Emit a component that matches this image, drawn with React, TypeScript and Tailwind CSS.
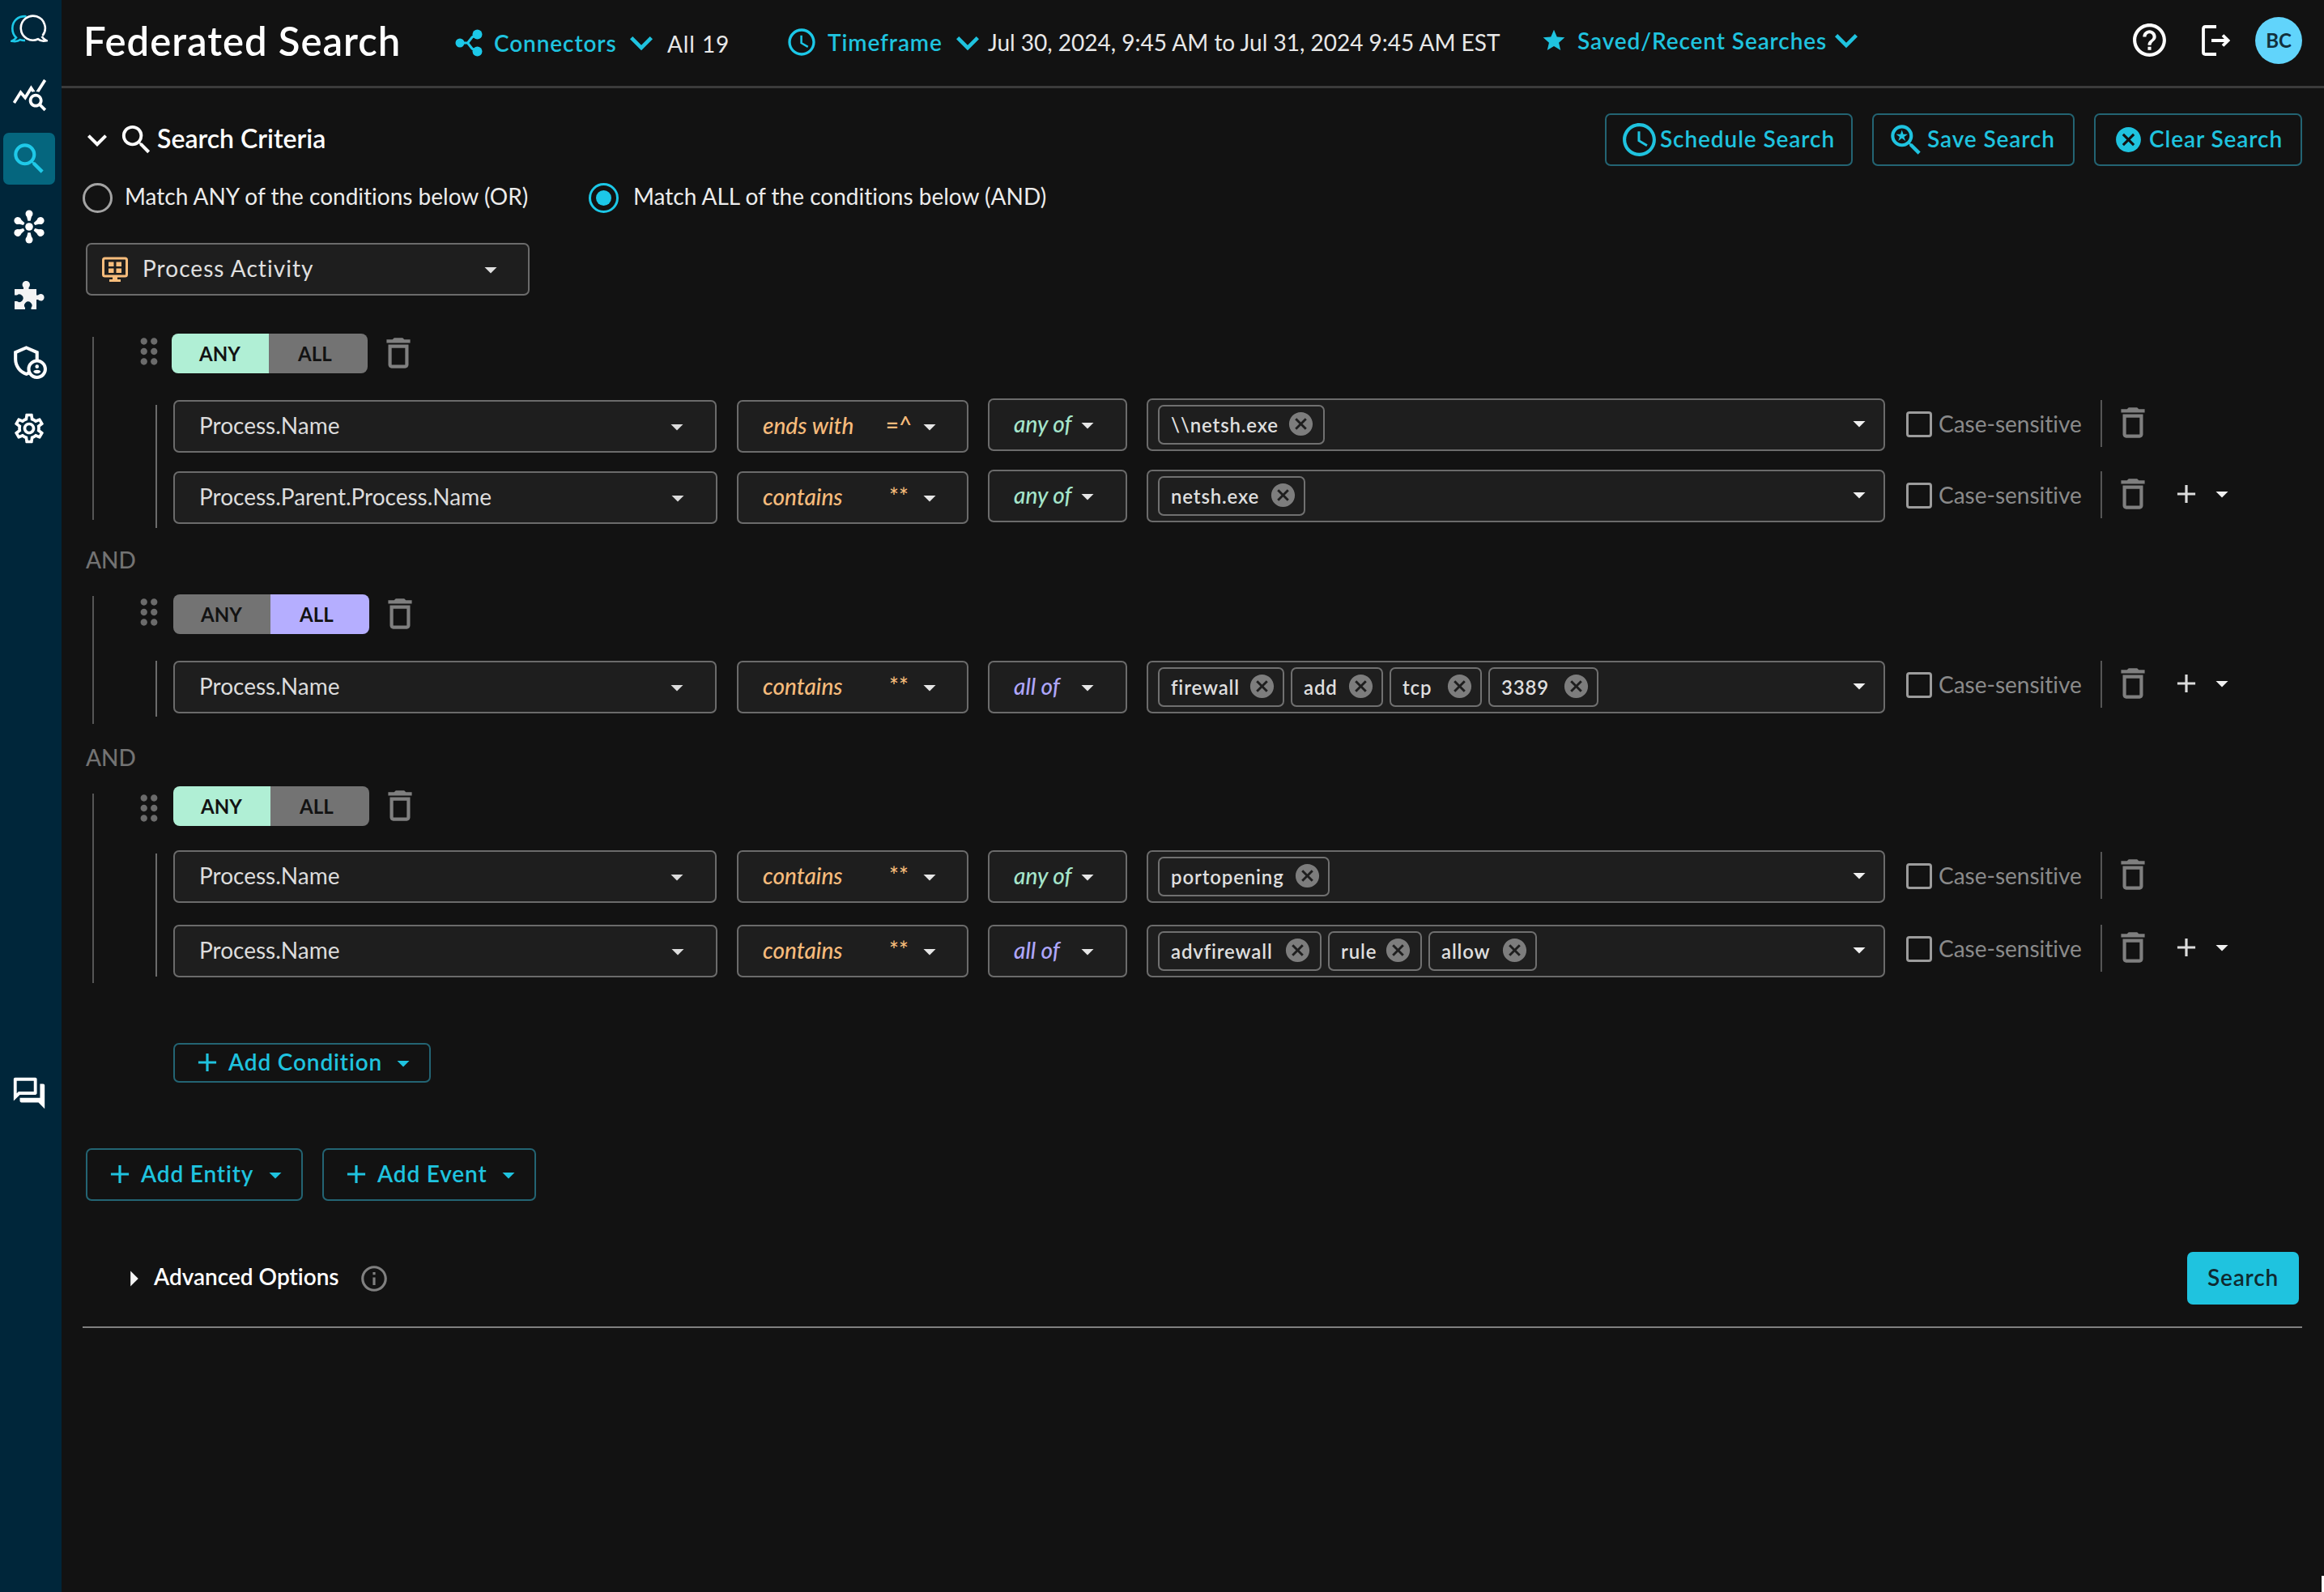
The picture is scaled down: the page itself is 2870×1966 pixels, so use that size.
import { useState } from "react";
import clsx from "clsx";
import {
  MdAccessTime,
  MdAdd,
  MdArrowDropDown,
  MdArrowRight,
  MdCancel,
  MdDeleteOutline,
  MdDragIndicator,
  MdHelpOutline,
  MdInfoOutline,
  MdKeyboardArrowDown,
  MdOutlineAdminPanelSettings,
  MdOutlineForum,
  MdOutlineSettings,
  MdQueryStats,
  MdSavedSearch,
  MdSearch,
  MdStar,
} from "react-icons/md";

interface chip {
  label: string;
  size: string;
}
interface condition {
  field: string;
  fieldSize: string;
  op: string;
  symbol: string;
  mode: string;
  chips: chip[];
  lift: string;
  drop: string;
  add: boolean;
}
interface group {
  active: string;
  height: string;
  outer: string;
  inner: string;
  toggle: string;
  drag: string;
  body: string;
  rows: condition[];
}

const groups: group[] = [
  {
    active: "ANY",
    height: "h-[240px]",
    outer: "mt-1 h-[226px]",
    inner: "mt-1.5 h-[152px]",
    toggle: "ml-[3px]",
    drag: "mb-[5px]",
    body: "mt-[33px] gap-[23px]",
    rows: [
      {
        field: "Process.Name",
        fieldSize: "w-[671px]",
        op: "ends with",
        symbol: "=^",
        mode: "any of",
        chips: [{ label: "\\\\netsh.exe", size: "w-[206px] pr-[10px]" }],
        lift: "-mt-0.5",
        drop: "",
        add: false,
      },
      {
        field: "Process.Parent.Process.Name",
        fieldSize: "w-[672px]",
        op: "contains",
        symbol: "**",
        mode: "any of",
        chips: [{ label: "netsh.exe", size: "w-[182px] pr-2" }],
        lift: "-mt-0.5",
        drop: "",
        add: true,
      },
    ],
  },
  {
    active: "ALL",
    height: "h-[160px]",
    outer: "mt-0.5 h-[158px]",
    inner: "h-[69px]",
    toggle: "ml-[5px]",
    drag: "mb-[5px]",
    body: "mt-[33px] gap-[23px]",
    rows: [
      {
        field: "Process.Name",
        fieldSize: "w-[671px]",
        op: "contains",
        symbol: "**",
        mode: "all of",
        chips: [
          { label: "firewall", size: "w-[156px] pr-2" },
          { label: "add", size: "w-[114px] pr-2" },
          { label: "tcp", size: "w-[114px] pr-2" },
          { label: "3389", size: "w-[136px] pr-2" },
        ],
        lift: "",
        drop: "",
        add: true,
      },
    ],
  },
  {
    active: "ANY",
    height: "h-[243px]",
    outer: "mt-[9px] h-[234px]",
    inner: "mt-1 h-[152px]",
    toggle: "ml-[5px]",
    drag: "mt-1",
    body: "mt-[30px] gap-[27px]",
    rows: [
      {
        field: "Process.Name",
        fieldSize: "w-[671px]",
        op: "contains",
        symbol: "**",
        mode: "any of",
        chips: [{ label: "portopening", size: "w-[212px] pr-2" }],
        lift: "",
        drop: "mt-0.5",
        add: false,
      },
      {
        field: "Process.Name",
        fieldSize: "w-[672px]",
        op: "contains",
        symbol: "**",
        mode: "all of",
        chips: [
          { label: "advfirewall", size: "w-[202px] pr-[10px]" },
          { label: "rule", size: "w-[116px] pr-[10px]" },
          { label: "allow", size: "w-[134px] pr-[8px]" },
        ],
        lift: "",
        drop: "",
        add: true,
      },
    ],
  },
];

function Logo() {
  return (
    <svg width="46" height="36" viewBox="0 0 46 36" fill="none" strokeWidth="2.6">
      <path d="M19.500 2.200C9 1.500 2.300 8 2.300 17c0 5.500 2 9 4.700 11.500C5.500 30.500 4 31.800 1.500 32.800c4 .800 8 .300 10.500-1.700 2 .800 4 1 6 .800" stroke="#1cc8e8" />
      <path d="M39.500 26A15 15 0 1 0 34 30.300c2.500 2.300 6 3 10.500 2-2.500-1-4.500-3-6-5.200" stroke="#fff" />
    </svg>
  );
}

function HubIcon() {
  return (
    <svg width="42" height="42" viewBox="-21 -21 42 42" fill="#fff">
      <circle r="4.800" />
      {[0, 62, 118, 180, 242, 298].map((a) => (
        <g key={a} transform={`rotate(${a})`}>
          <circle cy="-16" r="4.500" />
          <path d="M-3.300-14h6.600L1.600-7.200h-3.200z" />
        </g>
      ))}
    </svg>
  );
}

function PuzzleIcon() {
  return (
    <svg width="38" height="36" viewBox="0 0 38 36" fill="#f4f4f4">
      <path d="M1 10H12V8a4.700 4.700 0 1 1 6.500 0v2H28v7.500h2a4.300 4.300 0 1 1 0 5.500h-2v12h-6.500v-2a4.700 4.700 0 1 0-7.500 0v2H1V25h3a4.700 4.700 0 1 0 0-7.500H1z" />
    </svg>
  );
}

function ConnectorsIcon() {
  return (
    <svg width="34" height="34" viewBox="0 0 34 34" fill="#1cc8e8">
      <path d="M27 6.500 L21 10 L15.500 17 L21 24 L27 27.500 M15.500 17H5" stroke="#1cc8e8" strokeWidth="3" fill="none" />
      <circle cx="6" cy="17" r="5.500" />
      <circle cx="27.500" cy="6.500" r="6" />
      <circle cx="27.500" cy="27.500" r="6" />
    </svg>
  );
}

function LogoutIcon() {
  return (
    <svg width="36" height="40" viewBox="0 0 36 40" fill="none" stroke="#fff" strokeWidth="3.800">
      <path d="M19 3H5.500Q3 3 3 5.500v29Q3 37 5.500 37H19" />
      <path d="M13 20h20M27 13.500l6.500 6.500-6.500 6.500" />
    </svg>
  );
}

function MonitorIcon() {
  return (
    <svg width="34" height="32" viewBox="0 0 34 32" fill="#f9bd7c">
      <rect x="2.500" y="2" width="29" height="22" rx="2" fill="none" stroke="#f9bd7c" strokeWidth="3" />
      <path d="M9 6.500h6.500v5.500H9zM18.500 6.500h6.500v5.500h-6.500zM9 14.500h6.500v5.500H9zM18.500 14.500h6.500v5.500h-6.500zM14 24h6v4h4v3H10v-3h4z" />
    </svg>
  );
}

function Chip(props: chip) {
  return (
    <div className={clsx("flex h-[49px] items-center justify-between rounded-[7px] border-2 border-[#707070] pl-[14px]", props.size)}>
      <span className="text-[24px] font-semibold tracking-[0.85px] text-[#dedede]">{props.label}</span>
      <MdCancel size={35} className="-mt-[3px] shrink-0 text-[#7d7d7d]" />
    </div>
  );
}

function Row(props: condition) {
  const box = "flex h-[65px] items-center rounded-[7px] border-2 border-[#6b6b6b] bg-[#1e1e1e]";
  return (
    <div className="grid h-[65px] grid-cols-[696px_310px_196px_938px_auto] items-start text-[28px]">
      <div className={clsx(box, "justify-between pr-[29px] pl-[30px] text-[#dcdcdc]", props.fieldSize)}>
        <span className="-mt-1">{props.field}</span>
        <MdArrowDropDown size={36} />
      </div>
      <div className={clsx(box, "w-[286px] pl-[30px] font-medium text-[#f6bb7b] italic")}>
        <span className="-mt-1 w-[150px]">{props.op}</span>
        <span className="-mt-1.5 w-[36px] text-center not-italic">{props.symbol}</span>
        <MdArrowDropDown size={36} className="ml-[2px] text-[#e6e6e6]" />
      </div>
      <div className={clsx(box, props.lift, "w-[172px] pl-[30px] font-medium italic", props.mode === "any of" ? "text-[#a5e5cb]" : "text-[#aea6fa]")}>
        <span className="-mt-1 w-[73px]">{props.mode}</span>
        <MdArrowDropDown size={36} className="text-[#e6e6e6]" />
      </div>
      <div className={clsx(box, props.lift, "w-[912px] gap-2 pl-3")}>
        {props.chips.map((item: chip) => (
          <Chip key={item.label} {...item} />
        ))}
        <MdArrowDropDown size={36} className="-mt-1 mr-3 ml-auto text-[#f0f0f0]" />
      </div>
      <div className={clsx("flex h-[60px] items-center", props.drop)}>
        <div className="size-8 rounded-[4px] border-[3px] border-[#9c9c9c]" />
        <span className="-mt-0.5 ml-2 w-[200px] text-[#8a8a8a]">Case-sensitive</span>
        <div className="h-[58px] w-[2px] self-start bg-[#555555]" />
        <MdDeleteOutline size={50} className="mb-1 ml-[13px] text-[#7f7f7f]" />
        {props.add ? (
          <>
            <MdAdd size={38} className="mb-1 ml-[22px] text-[#dcdcdc]" />
            <MdArrowDropDown size={36} className="mb-1 ml-[7px] text-[#f0f0f0]" />
          </>
        ) : (
          <></>
        )}
      </div>
    </div>
  );
}

function Group(props: group) {
  const any = props.active === "ANY";
  return (
    <div className={clsx("flex items-start", props.height)}>
      <div className={clsx("ml-[38px] w-[2px] bg-[#555555]", props.outer)} />
      <div className="ml-[43px]">
        <div className="flex h-[49px] items-center">
          <MdDragIndicator size={50} className={clsx("text-[#6b6b6b]", props.drag)} />
          <div className={clsx("flex h-[49px] w-[242px] overflow-hidden rounded-[8px] text-[24px] font-bold text-[#121212]", props.toggle)}>
            <div className={clsx("flex w-[120px] items-center pl-[34px]", any ? "bg-[#b0efd5]" : "bg-[#737373]")}>ANY</div>
            <div className={clsx("flex flex-1 items-center pl-9", any ? "bg-[#737373]" : "bg-[#b5aeff]")}>ALL</div>
          </div>
          <MdDeleteOutline size={50} className="mb-px ml-[13px] text-[#7f7f7f]" />
        </div>
        <div className="flex">
          <div className={clsx("flex w-[55px] pl-[33px]", props.body)}>
            <div className={clsx("w-[2px] bg-[#6b6b6b]", props.inner)} />
          </div>
          <div className={clsx("flex flex-col", props.body)}>
            {props.rows.map((row: condition, i: number) => (
              <Row key={i} {...row} />
            ))}
          </div>
        </div>
      </div>
    </div>
  );
}

function Radio(props: { on: boolean }) {
  return (
    <div className={clsx("flex size-[37px] items-center justify-center rounded-full border-[3px]", props.on ? "border-[#1cc8e8]" : "border-[#a3a3a3]")}>
      {props.on ? <div className="size-[19px] rounded-full bg-[#1cc8e8]" /> : <></>}
    </div>
  );
}

function AddButton(props: { label: string; size: string; text: string }) {
  return (
    <button className={clsx("flex items-center rounded-[7px] border-2 border-[#236473] pl-[21px] text-[28px] font-semibold tracking-[0.85px] text-[#1fc3df]", props.size)}>
      <MdAdd size={38} className="mb-px" />
      <span className={clsx("mb-1 ml-[7px] text-left whitespace-nowrap", props.text)}>{props.label}</span>
      <MdArrowDropDown size={36} />
    </button>
  );
}

export default function App() {
  const [matchAll] = useState(true);

  return (
    <div className="flex h-[1966px] w-[2870px] overflow-hidden bg-[#121212] font-['Lato',sans-serif] text-white [font-variant-ligatures:none]">
      <nav className="flex w-[76px] shrink-0 flex-col bg-[#00263a]">
        <div className="mt-[18px] ml-[13px] h-9"><Logo /></div>
        <MdQueryStats size={45} className="mt-10 ml-[14px]" />
        <div className="mt-[25px] ml-1 flex h-16 w-16 items-center justify-center rounded-[7px] bg-[#05667e] text-[#1fc9e8]">
          <MdSearch size={50} />
        </div>
        <div className="mt-[31px] ml-[15px] h-[42px]"><HubIcon /></div>
        <div className="mt-[46px] ml-[17px] h-9"><PuzzleIcon /></div>
        <MdOutlineAdminPanelSettings size={49} className="mt-[38px] ml-[11px]" />
        <MdOutlineSettings size={44} className="mt-[37px] ml-[14px]" />
        <MdOutlineForum size={46} className="mt-[776px] ml-[13px]" />
      </nav>

      <div className="relative flex-1">
        <header className="flex h-[109px] items-center border-b-[3px] border-[#3b3b3b] text-[28px]">
          <h1 className="mb-1 ml-[27px] w-[459px] text-[49px] font-semibold tracking-[1px] whitespace-nowrap">Federated Search</h1>
          <ConnectorsIcon />
          <span className="ml-[14px] w-[154px] font-semibold tracking-[0.9px] text-[#1fc3df]">Connectors</span>
          <MdKeyboardArrowDown size={56} className="text-[#1fc3df]" />
          <span className="mt-px ml-[4px] w-[146px] tracking-[0.9px] text-[#e8e8e8]">All 19</span>
          <MdAccessTime size={40} className="mb-0.5 text-[#1cc8e8]" />
          <span className="mb-0.5 ml-[12px] w-[145px] font-semibold tracking-[0.9px] text-[#1fc3df]">Timeframe</span>
          <MdKeyboardArrowDown size={56} className="text-[#1fc3df]" />
          <span className="mb-0.5 -ml-[3px] w-[683px] whitespace-nowrap text-[#e8e8e8]">Jul 30, 2024, 9:45 AM to Jul 31, 2024 9:45 AM EST</span>
          <MdStar size={32} className="mb-1.5 text-[#1fc3df]" />
          <span className="mb-1.5 ml-[13px] w-[304px] font-semibold tracking-[0.9px] whitespace-nowrap text-[#1fc3df]">Saved/Recent Searches</span>
          <MdKeyboardArrowDown size={56} className="mb-1.5 text-[#1fc3df]" />
          <MdHelpOutline size={49} className="mb-[7px] ml-auto" />
          <div className="mr-[31px] mb-[7px] ml-[39px]"><LogoutIcon /></div>
          <div className="mr-[27px] mb-[7px] flex size-[58px] items-center justify-center rounded-full bg-[#61d4fb] text-[24px] font-bold text-[#12303c]">BC</div>
        </header>

        <div className="mt-[31px] flex h-[65px] items-center pr-[27px] pl-5 text-[28px] font-semibold tracking-[0.9px] text-[#1fc3df]">
          <MdKeyboardArrowDown size={48} className="text-white" />
          <MdSearch size={47} className="ml-px text-white" />
          <span className="mb-1 ml-[2px] text-[32px] tracking-normal text-white">Search Criteria</span>
          <button className="ml-auto flex h-[65px] w-[306px] items-center rounded-[7px] border-2 border-[#236473] pl-4">
            <MdAccessTime size={49} />
            <span className="mb-1 ml-[1px] whitespace-nowrap">Schedule Search</span>
          </button>
          <button className="ml-6 flex h-[65px] w-[250px] items-center rounded-[7px] border-2 border-[#236473] pl-[15px]">
            <MdSavedSearch size={50} />
            <span className="mb-1 ml-[1px] whitespace-nowrap">Save Search</span>
          </button>
          <button className="ml-6 flex h-[65px] w-[257px] items-center rounded-[7px] border-2 border-[#236473] pl-[22px]">
            <MdCancel size={37} />
            <span className="mb-1 ml-[7px] whitespace-nowrap">Clear Search</span>
          </button>
        </div>

        <div className="mt-[21px] flex h-[37px] items-center pl-[26px] text-[28px] text-[#ececec]">
          <Radio on={!matchAll} />
          <span className="mb-1.5 ml-[15px] w-[573px]">Match ANY of the conditions below (OR)</span>
          <Radio on={matchAll} />
          <span className="mb-1.5 ml-[18px]">Match ALL of the conditions below (AND)</span>
        </div>

        <div className="mt-[37px] ml-[30px] flex h-[65px] w-[548px] items-center rounded-[7px] border-2 border-[#6b6b6b] bg-[#1e1e1e] pl-[17px] text-[28px] text-[#e0e0e0]">
          <MonitorIcon />
          <span className="mb-[3px] ml-[17px] w-[412px] tracking-[1.05px]">Process Activity</span>
          <MdArrowDropDown size={36} />
        </div>

        <div className="mt-[47px]">
          <Group {...groups[0]} />
          <div className="flex h-[82px] items-center pb-1 pl-[30px] text-[28px] font-medium text-[#737373]">AND</div>
          <Group {...groups[1]} />
          <div className="flex h-[77px] items-center pt-1 pl-[30px] text-[28px] font-medium text-[#737373]">AND</div>
          <Group {...groups[2]} />
        </div>

        <div className="mt-[74px] ml-[138px]">
          <AddButton label="Add Condition" size="h-[49px] w-[318px]" text="w-[198px]" />
        </div>
        <div className="mt-[81px] ml-[30px] flex gap-6">
          <AddButton label="Add Entity" size="h-[65px] w-[268px]" text="w-[148px]" />
          <AddButton label="Add Event" size="h-[65px] w-[264px]" text="w-[144px]" />
        </div>

        <div className="mt-[63px] flex h-[65px] items-center pr-[31px] pl-[66px]">
          <MdArrowRight size={46} className="text-[#f5f5f5]" />
          <span className="mb-1.5 ml-[2px] w-[253px] text-[28px] font-semibold">Advanced Options</span>
          <MdInfoOutline size={38} className="text-[#808080]" />
          <button className="ml-auto h-[65px] w-[138px] rounded-[7px] bg-[#1fc3df] pb-[3px] text-[28px] font-semibold tracking-[0.8px] text-[#0f2a30]">Search</button>
        </div>
        <div className="mt-[27px] mr-[27px] ml-[26px] h-[2px] bg-[#808080]" />
        <div className="absolute right-0 bottom-0 h-5 w-[3px] bg-white" />
      </div>
    </div>
  );
}
